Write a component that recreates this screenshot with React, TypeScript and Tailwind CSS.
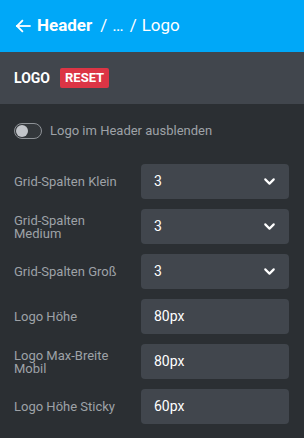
import { ChevronDown } from "lucide-react";

type Row = {
   label: string;
   value: string;
   select?: boolean;
};

const rows: Row[] = [
   { label: "Grid-Spalten Klein", value: "3", select: true },
   { label: "Grid-Spalten Medium", value: "3", select: true },
   { label: "Grid-Spalten Groß", value: "3", select: true },
   { label: "Logo Höhe", value: "80px" },
   { label: "Logo Max-Breite Mobil", value: "80px" },
   { label: "Logo Höhe Sticky", value: "60px" },
];

function ArrowLeft() {
   return (
      <svg width="18" height="18" viewBox="0 0 24 24" fill="none" stroke="white" strokeWidth="2.4" strokeLinecap="square">
         <path d="M21 12H4" />
         <path d="M11 5l-7 7 7 7" />
      </svg>
   );
}

export default function App() {
   return (
      <div className="w-[304px] h-[438px] bg-[#2b2f33] font-['Roboto',sans-serif] overflow-hidden">
         <div className="h-[52px] bg-[#00a8f8] flex items-center pl-[14px] text-white text-[17px]">
            <ArrowLeft />
            <span className="font-bold ml-[5px]">Header</span>
            <span className="ml-[8px]">/</span>
            <span className="ml-[5px]">…</span>
            <span className="ml-[6px]">/</span>
            <span className="ml-[5px]">Logo</span>
         </div>
         <div className="h-[52px] bg-[#41464d] flex items-center pl-[14px]">
            <span className="text-white font-bold text-[14px]">LOGO</span>
            <span className="ml-[10px] bg-[#dc3545] text-white font-bold text-[13px] rounded-[2px] h-[20px] px-[5px] flex items-center">
               RESET
            </span>
         </div>
         <div className="px-[14px] pt-[18px]">
            <div className="flex items-center h-[17px]">
               <div className="w-[28px] h-[16px] rounded-full border border-[#8e9297] bg-[#33373b] flex items-center pl-[1px]">
                  <div className="w-[12px] h-[12px] rounded-full bg-[#c2c5ca]" />
               </div>
               <span className="ml-[8px] text-[13px] text-[#9ea2a7]">Logo im Header ausblenden</span>
            </div>
            <div className="mt-[25px] flex flex-col gap-[10px]">
               {rows.map((r) => (
                  <div key={r.label} className="flex items-center h-[35px]">
                     <div className="w-[127px] text-[13px] leading-[13px] text-[#9ea2a7] pr-[8px]">{r.label}</div>
                     <div className="w-[148px] h-[35px] bg-[#41464d] rounded-[4px] flex items-center justify-between pl-[13px] pr-[11px] text-white text-[14px]">
                        <span>{r.value}</span>
                        {r.select && <ChevronDown size={17} strokeWidth={3} color="white" />}
                     </div>
                  </div>
               ))}
            </div>
         </div>
      </div>
   );
}
